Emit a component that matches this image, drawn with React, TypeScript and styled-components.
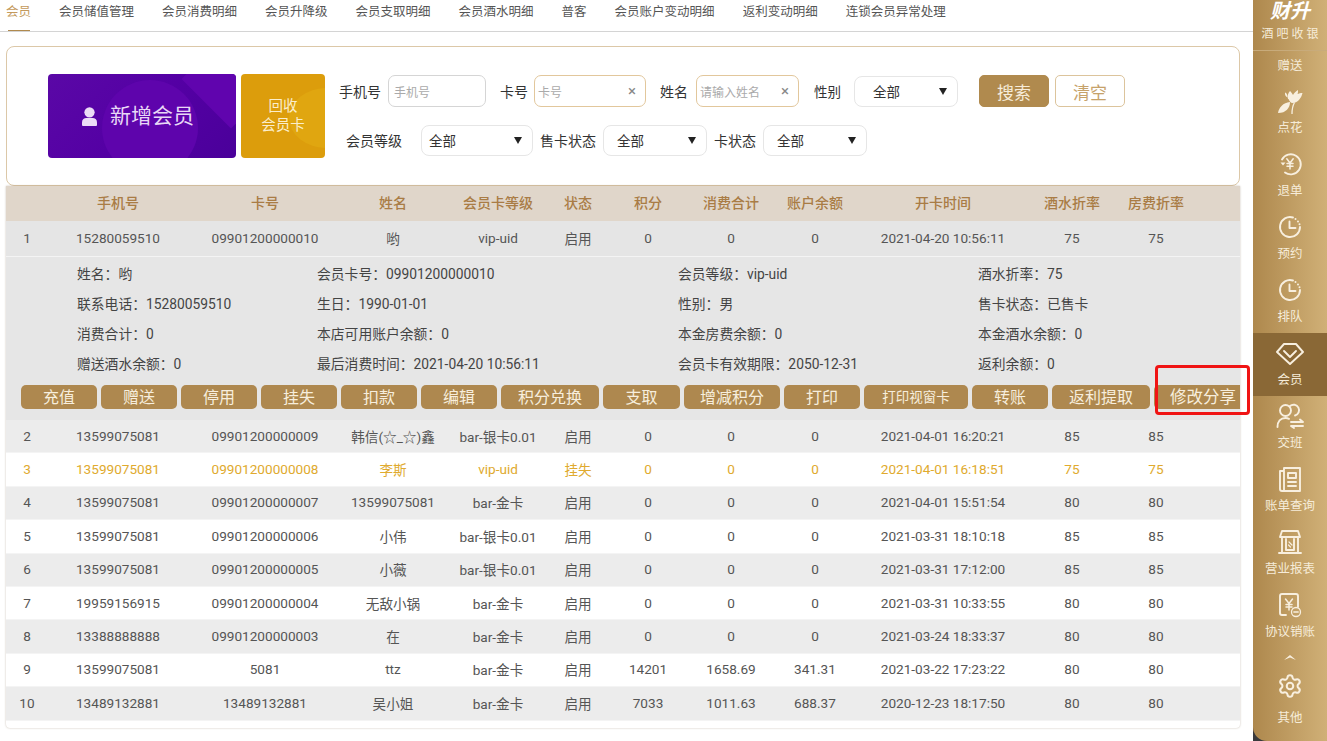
import React from "react";
import styled, {createGlobalStyle} from "styled-components";
import {Settings} from "lucide-react";

const GlobalStyle = createGlobalStyle`
    html, body {
        margin: 0;
        padding: 0;
        background: #fff;
    }

    body {
        font-family: Roboto, "Noto Sans CJK SC", sans-serif;
        color: #555;
    }

    * {
        box-sizing: border-box;
    }
`;

const columns = "42px 140px 154px 102px 108px 52px 88px 78px 90px 166px 92px 76px 46px";

const Page = styled.div`
    position: relative;
    display: grid;
    grid-template-columns: 1253px 74px;
    width: 1327px;
    height: 741px;
    overflow: hidden;
    background: #fff;
`;

const Main = styled.div`
    display: flex;
    flex-direction: column;
    min-width: 0;
`;

const Tabs = styled.div`
    display: flex;
    gap: 28px;
    height: 32px;
    padding-left: 6px;
    border-bottom: 1px solid #d4d4d4;
`;

const Tab = styled.div<{ $active?: boolean }>`
    position: relative;
    height: 31px;
    padding-top: 4px;
    font-size: 12.5px;
    line-height: 16px;
    white-space: nowrap;
    color: ${p => p.$active ? "#c49a5c" : "#555"};

    ${p => p.$active && `
        &:after {
            content: "";
            position: absolute;
            left: 2px;
            right: 1px;
            bottom: 0;
            height: 1px;
            background: #b08a4e;
        }
    `}
`;

const Content = styled.div`
    display: flex;
    flex-direction: column;
    padding: 14px 13px 0 6px;
`;

const Panel = styled.div`
    display: flex;
    height: 140px;
    padding: 27px 0 0 41px;
    background: #fff;
    border: 1px solid #dcc8a8;
    border-radius: 8px;
`;

const BigButton = styled.div<{ $tone: "purple" | "gold" }>`
    position: relative;
    display: flex;
    align-items: center;
    justify-content: center;
    flex-shrink: 0;
    overflow: hidden;
    width: ${p => p.$tone === "purple" ? "188px" : "84px"};
    height: 84px;
    margin-right: ${p => p.$tone === "purple" ? "5px" : "14px"};
    border-radius: 4px;
    color: ${p => p.$tone === "purple" ? "#e8d8f6" : "#fbeecb"};
    background: ${p => p.$tone === "purple"
        ? "linear-gradient(135deg, #5a08a6 0%, #5400a4 50%, #4a009a 100%)"
        : "#dc9d0c"};

    &:before {
        content: "";
        position: absolute;
        left: ${p => p.$tone === "purple" ? "54px" : "48px"};
        top: ${p => p.$tone === "purple" ? "6px" : "14px"};
        width: ${p => p.$tone === "purple" ? "96px" : "76px"};
        height: ${p => p.$tone === "purple" ? "96px" : "60px"};
        border-radius: 50%;
        background: ${p => p.$tone === "purple" ? "#5e04ac" : "#e0a610"};
    }

    &:after {
        content: "";
        position: absolute;
        right: -30px;
        top: -30px;
        width: 70px;
        height: 70px;
        transform: rotate(45deg);
        background: ${p => p.$tone === "purple" ? "#6004ae" : "transparent"};
    }
`;

const BigLabel = styled.div<{ $size: number; $shift?: number }>`
    position: relative;
    z-index: 1;
    display: flex;
    align-items: center;
    gap: 13px;
    padding-right: ${p => p.$shift || 0}px;
    font-size: ${p => p.$size}px;
    line-height: 19px;
    text-align: center;
`;

const Form = styled.div`
    display: flex;
    flex-direction: column;
    gap: 17px;
    padding-top: 1px;
`;

const FormRow = styled.div<{ $indent?: number }>`
    display: flex;
    align-items: center;
    height: 32px;
    padding-left: ${p => p.$indent || 0}px;
`;

const FieldLabel = styled.div<{ $gap: number; $after?: number; $size?: number }>`
    flex-shrink: 0;
    margin-left: ${p => p.$after || 0}px;
    margin-right: ${p => p.$gap}px;
    font-size: ${p => p.$size || 14}px;
    color: #333;
    white-space: nowrap;
`;

const TextInput = styled.div<{ $width: number; $focus?: boolean }>`
    display: flex;
    align-items: center;
    justify-content: space-between;
    width: ${p => p.$width}px;
    height: 32px;
    padding: 0 9px 0 ${p => p.$focus ? 3 : 5}px;
    font-size: 12px;
    color: #aaa;
    border: 1px solid ${p => p.$focus ? "#e2c79c" : "#d5d5d5"};
    border-radius: 7px;
    white-space: nowrap;
`;

const Clear = styled.span`
    font-size: 15px;
    color: #888;
`;

const Select = styled.div<{ $width: number; $pad: number }>`
    display: flex;
    align-items: center;
    justify-content: space-between;
    width: ${p => p.$width}px;
    height: 31px;
    padding: 0 10px 0 ${p => p.$pad}px;
    font-size: 13.5px;
    color: #333;
    border: 1px solid #e6e6e6;
    border-radius: 8px;
`;

const Caret = styled.span`
    width: 0;
    height: 0;
    border-left: 4px solid transparent;
    border-right: 4px solid transparent;
    border-top: 7px solid #222;
`;

const ActionButton = styled.div<{ $solid?: boolean }>`
    display: flex;
    align-items: center;
    justify-content: center;
    width: 70px;
    height: 32px;
    margin-left: ${p => p.$solid ? 21 : 6}px;
    font-size: 17px;
    border-radius: 5px;
    border: 1px solid ${p => p.$solid ? "#b08a4e" : "#dcc49c"};
    background: ${p => p.$solid ? "#b08a4e" : "#fff"};
    color: ${p => p.$solid ? "#f6ecd9" : "#c6a26a"};
`;

const Table = styled.div`
    display: flex;
    flex-direction: column;
    height: 542px;
    background: #fff;
    border-radius: 0 0 4px 4px;
    box-shadow: 0 0 2px rgba(120, 100, 70, .45);
`;

const HeadRow = styled.div`
    display: grid;
    grid-template-columns: ${columns};
    align-items: center;
    height: 35px;
    padding-bottom: 3px;
    font-size: 14px;
    font-weight: 500;
    text-align: center;
    color: #a97c45;
    background: #e0d6ca;
`;

const Row = styled.div<{ $tone?: "open" | "gray" | "white"; $flag?: boolean; $tall?: boolean }>`
    display: grid;
    grid-template-columns: ${columns};
    align-items: center;
    flex-shrink: 0;
    height: ${p => p.$tall ? "36px" : "33.4px"};
    padding-bottom: ${p => p.$tall ? "2px" : "1px"};
    font-size: 13.6px;
    text-align: center;
    color: ${p => p.$flag ? "#e0aa2e" : "#555"};
    background: ${p => p.$tone === "open" ? "#e5e5e5" : p.$tone === "gray" ? "#ececec" : "#fff"};
    border-bottom: 1px solid #f4f4f4;
`;

const Detail = styled.div`
    flex-shrink: 0;
    height: 163px;
    padding: 1px 0 0 15px;
    background: #e6e6e6;
`;

const DetailGrid = styled.div`
    display: grid;
    grid-template-columns: 240px 361px 300px 1fr;
    grid-auto-rows: 30px;
    align-items: center;
    padding-left: 56px;
    font-size: 13.8px;
    color: #444;
`;

const ButtonBar = styled.div`
    display: flex;
    gap: 4px;
    width: 1219px;
    margin-top: 7px;
    overflow: hidden;
`;

const RowButton = styled.div<{ $width: number; $size?: number }>`
    display: flex;
    align-items: center;
    justify-content: center;
    flex-shrink: 0;
    width: ${p => p.$width}px;
    height: 24px;
    padding-bottom: 2px;
    font-size: ${p => p.$size || 16}px;
    color: #f7eedd;
    white-space: nowrap;
    background: #ae884f;
    border-radius: 5px;
`;

const RedMark = styled.div`
    position: absolute;
    left: 1155px;
    top: 365px;
    width: 95px;
    height: 50px;
    border: 3px solid #f01414;
    border-radius: 4px;
`;

const Side = styled.div`
    background: #3a3a3c;
`;

const SideInner = styled.div`
    display: flex;
    flex-direction: column;
    align-items: stretch;
    height: 741px;
    color: #f6ecd9;
    background: linear-gradient(90deg, #ae884d 0%, #d0b077 100%);
    border-radius: 0 0 0 14px;
`;

const Brand = styled.div`
    height: 51px;
    text-align: center;
    border-bottom: 1px solid #c8ab7b;
`;

const BrandName = styled.div`
    height: 25px;
    font-size: 20px;
    line-height: 22px;
    font-weight: 700;
    font-style: italic;
    color: #fff;
`;

const BrandSub = styled.div`
    font-size: 12px;
    line-height: 18px;
    letter-spacing: 3px;
    padding-left: 3px;
`;

const SideText = styled.div`
    height: 30px;
    padding-top: 7px;
    font-size: 12.5px;
    line-height: 16px;
    text-align: center;
`;

const SideItem = styled.div<{ $active?: boolean; $height?: number; $gap?: number }>`
    display: flex;
    flex-direction: column;
    align-items: center;
    flex-shrink: 0;
    height: ${p => p.$height || 63}px;
    padding-top: 7px;
    font-size: 12.5px;
    line-height: 16px;
    white-space: nowrap;
    background: ${p => p.$active ? "#8a6836" : "transparent"};

    svg {
        flex-shrink: 0;
        margin-bottom: ${p => p.$gap || 6}px;
    }
`;

const Chevron = styled.div`
    display: flex;
    justify-content: center;
    flex-shrink: 0;
    height: 18px;
    padding-top: 6px;
`;

const ic = {
    width: 26,
    height: 26,
    viewBox: "0 0 26 26",
    fill: "none",
    stroke: "#f8efdf",
    strokeWidth: 1.9,
    strokeLinecap: "round" as const,
    strokeLinejoin: "round" as const,
};

const UserIcon = () => (
    <svg width="15" height="21" viewBox="0 0 16 22" fill="#ecdcf6">
        <circle cx="8" cy="6.5" r="5.5"/>
        <path d="M1 21c-.6 0-1-.4-1-1v-3c0-3 2.500-4.500 4.500-4.500h7c2 0 4.500 1.500 4.500 4.500v3c0 .6-.4 1-1 1z"/>
    </svg>
);

const FlowerIcon = () => (
    <svg width="26" height="26" viewBox="0 0 26 26" fill="#f8efdf">
        <path d="M1 25c1-6 5-10 12-11 0 6-4 11-12 11z"/>
        <path d="M11 11c-1-3 0-6 2-8 1 1 2 2 3 4 1-2 3-4 5-5 0 2 0 3-.5 4 1.500-.5 3-1 5-1-1 5-5 10-10 10-2 0-3-2-4-4z"/>
        <path d="M8 4.500c1.500.5 2.500 2 2.500 5-1.500-.5-3-2.500-2.500-5z"/>
        <path d="M15 26c0-4 .5-8 2.500-11.500" fill="none" stroke="#f8efdf" strokeWidth="1.300"/>
    </svg>
);

const RefundIcon = () => (
    <svg {...ic}>
        <path d="M5 8.500A10 10 0 1 1 8 21.500"/>
        <path d="M3.500 11.500h5l-2.500 3z" fill="#f8efdf" stroke="none"/>
        <path d="M9.800 7.800L13 12l3.200-4.200M13 12v6M10 12.600h6M10 15.200h6" strokeWidth="1.500"/>
    </svg>
);

const ClockIcon = () => (
    <svg {...ic}>
        <path d="M16 3.500A10 10 0 1 0 23 13"/>
        <path d="M18.500 5v.01M21 7.500v.01M22.500 10.200v.01" strokeWidth="2"/>
        <path d="M12.500 7.500V14h6"/>
    </svg>
);

const DiamondIcon = () => (
    <svg {...ic} width="28" viewBox="0 0 28 26">
        <path d="M8 4h12l7 8-13 12L1 12z"/>
        <path d="M8 11l6 6 6-6"/>
    </svg>
);

const ShiftIcon = () => (
    <svg {...ic} width="28" viewBox="0 0 28 26">
        <circle cx="9.500" cy="7.500" r="5.500"/>
        <path d="M14 3a5.500 5.500 0 1 1 5 9.500"/>
        <path d="M1.500 24c0-5.500 3-9 8-9 1.500 0 2.500.3 3.500.8"/>
        <path d="M15 19h12l-3-2.500M27 23H15l3 2"/>
    </svg>
);

const BillIcon = () => (
    <svg {...ic} width="24" viewBox="0 0 24 26">
        <path d="M6 4V2h16v23H4a2 2 0 0 1-2-2V5h4v20"/>
        <path d="M10 7h8v5h-8zM10 16h8M10 20h8"/>
    </svg>
);

const ReportIcon = () => (
    <svg {...ic} width="24" viewBox="0 0 24 26">
        <path d="M4 2h16l2 6H2zM4 8v15M20 8v15M1 24h22"/>
        <path d="M8 10v11h8V10"/>
        <path d="M11 13l3 3M10.500 16l2 2" strokeWidth="1.200"/>
    </svg>
);

const SettleIcon = () => (
    <svg {...ic} width="24" viewBox="0 0 24 26">
        <path d="M8 23H4a2 2 0 0 1-2-2V4a2 2 0 0 1 2-2h14a2 2 0 0 1 2 2v11"/>
        <path d="M7.500 7l3.500 4.500L14.500 7M11 11.500V18M8 12.500h6M8 15h6" strokeWidth="1.500"/>
        <circle cx="18" cy="20" r="4.500" strokeWidth="1.300"/>
        <path d="M15.800 20h4.400" strokeWidth="1.300"/>
    </svg>
);

const tabs = ["会员", "会员储值管理", "会员消费明细", "会员升降级", "会员支取明细", "会员酒水明细", "普客", "会员账户变动明细", "返利变动明细", "连锁会员异常处理"];

const heads = ["", "手机号", "卡号", "姓名", "会员卡等级", "状态", "积分", "消费合计", "账户余额", "开卡时间", "酒水折率", "房费折率", ""];

const firstRow = ["1", "15280059510", "09901200000010", "哟", "vip-uid", "启用", "0", "0", "0", "2021-04-20 10:56:11", "75", "75", ""];

const rows = [
    ["2", "13599075081", "09901200000009", "韩信(☆_☆)鑫", "bar-银卡0.01", "启用", "0", "0", "0", "2021-04-01 16:20:21", "85", "85", ""],
    ["3", "13599075081", "09901200000008", "李斯", "vip-uid", "挂失", "0", "0", "0", "2021-04-01 16:18:51", "75", "75", ""],
    ["4", "13599075081", "09901200000007", "13599075081", "bar-金卡", "启用", "0", "0", "0", "2021-04-01 15:51:54", "80", "80", ""],
    ["5", "13599075081", "09901200000006", "小伟", "bar-银卡0.01", "启用", "0", "0", "0", "2021-03-31 18:10:18", "85", "85", ""],
    ["6", "13599075081", "09901200000005", "小薇", "bar-银卡0.01", "启用", "0", "0", "0", "2021-03-31 17:12:00", "85", "85", ""],
    ["7", "19959156915", "09901200000004", "无敌小锅", "bar-金卡", "启用", "0", "0", "0", "2021-03-31 10:33:55", "80", "80", ""],
    ["8", "13388888888", "09901200000003", "在", "bar-金卡", "启用", "0", "0", "0", "2021-03-24 18:33:37", "80", "80", ""],
    ["9", "13599075081", "5081", "ttz", "bar-金卡", "启用", "14201", "1658.69", "341.31", "2021-03-22 17:23:22", "80", "80", ""],
    ["10", "13489132881", "13489132881", "吴小姐", "bar-金卡", "启用", "7033", "1011.63", "688.37", "2020-12-23 18:17:50", "80", "80", ""],
];

const details = [
    "姓名：哟", "会员卡号：09901200000010", "会员等级：vip-uid", "酒水折率：75",
    "联系电话：15280059510", "生日：1990-01-01", "性别：男", "售卡状态：已售卡",
    "消费合计：0", "本店可用账户余额：0", "本金房费余额：0", "本金酒水余额：0",
    "赠送酒水余额：0", "最后消费时间：2021-04-20 10:56:11", "会员卡有效期限：2050-12-31", "返利余额：0",
];

const actions: { label: string; width: number; size?: number }[] = [
    {label: "充值", width: 76},
    {label: "赠送", width: 76},
    {label: "停用", width: 76},
    {label: "挂失", width: 76},
    {label: "扣款", width: 76},
    {label: "编辑", width: 76},
    {label: "积分兑换", width: 98},
    {label: "支取", width: 77},
    {label: "增减积分", width: 96},
    {label: "打印", width: 76},
    {label: "打印视窗卡", width: 104, size: 13.5},
    {label: "转账", width: 76},
    {label: "返利提取", width: 98},
    {label: "修改分享", width: 98, size: 16.5},
];

const sideItems: { label: string; icon: React.ReactNode; active?: boolean }[] = [
    {label: "退单", icon: <RefundIcon/>},
    {label: "预约", icon: <ClockIcon/>},
    {label: "排队", icon: <ClockIcon/>},
    {label: "会员", icon: <DiamondIcon/>, active: true},
    {label: "交班", icon: <ShiftIcon/>},
    {label: "账单查询", icon: <BillIcon/>},
    {label: "营业报表", icon: <ReportIcon/>},
    {label: "协议销账", icon: <SettleIcon/>},
];

export default function App() {
    return (
        <Page>
            <GlobalStyle/>
            <Main>
                <Tabs>
                    {tabs.map((t, i) => <Tab key={t} $active={i === 0}>{t}</Tab>)}
                </Tabs>
                <Content>
                    <Panel>
                        <BigButton $tone="purple">
                            <BigLabel $size={21} $shift={8}><UserIcon/>新增会员</BigLabel>
                        </BigButton>
                        <BigButton $tone="gold">
                            <BigLabel $size={14.5}>回收<br/>会员卡</BigLabel>
                        </BigButton>
                        <Form>
                            <FormRow>
                                <FieldLabel $gap={7}>手机号</FieldLabel>
                                <TextInput $width={98}>手机号</TextInput>
                                <FieldLabel $after={14} $gap={6}>卡号</FieldLabel>
                                <TextInput $width={112} $focus>卡号<Clear>×</Clear></TextInput>
                                <FieldLabel $after={14} $gap={8}>姓名</FieldLabel>
                                <TextInput $width={103} $focus>请输入姓名<Clear>×</Clear></TextInput>
                                <FieldLabel $after={15} $gap={13} $size={13.5}>性别</FieldLabel>
                                <Select $width={104} $pad={18}>全部<Caret/></Select>
                                <ActionButton $solid>搜索</ActionButton>
                                <ActionButton>清空</ActionButton>
                            </FormRow>
                            <FormRow $indent={7}>
                                <FieldLabel $gap={19}>会员等级</FieldLabel>
                                <Select $width={112} $pad={7}>全部<Caret/></Select>
                                <FieldLabel $after={7} $gap={7}>售卡状态</FieldLabel>
                                <Select $width={104} $pad={13}>全部<Caret/></Select>
                                <FieldLabel $after={7} $gap={7}>卡状态</FieldLabel>
                                <Select $width={104} $pad={13}>全部<Caret/></Select>
                            </FormRow>
                        </Form>
                    </Panel>
                    <Table>
                        <HeadRow>
                            {heads.map((h, i) => <div key={i}>{h}</div>)}
                        </HeadRow>
                        <Row $tone="open" $tall>
                            {firstRow.map((c, i) => <div key={i}>{c}</div>)}
                        </Row>
                        <Detail>
                            <DetailGrid>
                                {details.map(d => <div key={d}>{d}</div>)}
                            </DetailGrid>
                            <ButtonBar>
                                {actions.map(a => (
                                    <RowButton key={a.label} $width={a.width} $size={a.size}>{a.label}</RowButton>
                                ))}
                            </ButtonBar>
                        </Detail>
                        {rows.map((r, i) => (
                            <Row key={r[0]} $tone={i % 2 === 0 ? "gray" : "white"} $flag={r[5] === "挂失"}>
                                {r.map((c, j) => <div key={j}>{c}</div>)}
                            </Row>
                        ))}
                    </Table>
                </Content>
            </Main>
            <Side>
                <SideInner>
                    <Brand>
                        <BrandName>财升</BrandName>
                        <BrandSub>酒吧收银</BrandSub>
                    </Brand>
                    <SideText>赠送</SideText>
                    <SideItem><FlowerIcon/>点花</SideItem>
                    {sideItems.map(s => (
                        <SideItem key={s.label} $active={s.active}>{s.icon}{s.label}</SideItem>
                    ))}
                    <Chevron>
                        <svg width="12" height="6" viewBox="0 0 12 6" fill="#f8efdf"><path d="M0 6l6-5 6 5-6-2.500z"/></svg>
                    </Chevron>
                    <SideItem $height={75} $gap={11}>
                        <Settings size={26} color="#f8efdf" strokeWidth={1.9}/>
                        其他
                    </SideItem>
                </SideInner>
            </Side>
            <RedMark/>
        </Page>
    );
}
